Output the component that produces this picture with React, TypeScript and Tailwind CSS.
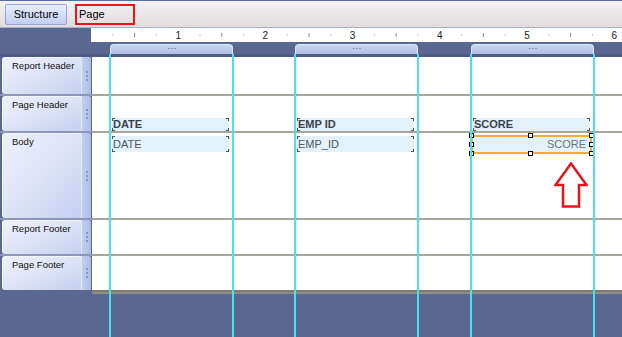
import React from 'react';

const font = { fontFamily: '"Liberation Sans", Arial, sans-serif' };

function Ruler() {
  const items = [];
  for (let n = 1; n <= 24; n++) {
    const x = n * 21.8;
    if (n % 4 === 0) {
      items.push(
        <text key={n} x={x} y={11} fontSize="10" textAnchor="middle" fill="#1a1a1a" fontFamily="Liberation Sans, Arial, sans-serif">
          {n / 4}
        </text>
      );
    } else if (n % 2 === 0) {
      items.push(<rect key={n} x={x - 0.5} y={5} width={1} height={4} fill="#8a8a8a" />);
    } else {
      items.push(<rect key={n} x={x - 0.5} y={6.5} width={1} height={1} fill="#9a9a9a" />);
    }
  }
  return (
    <svg width="531" height="14" className="block">
      {items}
    </svg>
  );
}

function Tab({ className }: { className: string }) {
  return (
    <div className={`h-[10px] rounded-t-[4px] border-t border-l border-r border-[#dfe6f8] bg-gradient-to-b from-[#c9d5f2] to-[#b1c1e7] flex justify-center gap-[1px] pt-[3px] ${className}`}>
      <span className="w-[2px] h-[1px] bg-[#8d96b2]" />
      <span className="w-[2px] h-[1px] bg-[#8d96b2]" />
      <span className="w-[2px] h-[1px] bg-[#8d96b2]" />
    </div>
  );
}

function Handle() {
  return (
    <div className="w-[10px] shrink-0 bg-gradient-to-r from-[#c2cdee] to-[#aebce4] border-l border-[#e2e7f8] rounded-tr-[2px] flex flex-col items-center justify-center gap-[2px]">
      <span className="w-[2px] h-[2px] bg-[#8f98b6]" />
      <span className="w-[2px] h-[2px] bg-[#8f98b6]" />
      <span className="w-[2px] h-[2px] bg-[#8f98b6]" />
    </div>
  );
}

function Label({ text }: { text: string }) {
  return (
    <div className="w-[92px] shrink-0 pl-[2px] pr-[1px] flex">
      <div className="flex-1 rounded-l-[3px] bg-gradient-to-br from-[#eef0fb] via-[#dde2f7] to-[#c6cff0] border-t border-l border-[#f4f6fd] pl-[9px] pt-[2px] text-[9.5px] text-[#111] leading-[12px]">
        {text}
      </div>
      <Handle />
    </div>
  );
}

function Sep() {
  return (
    <div className="flex h-[2px]">
      <div className="w-[92px] shrink-0 bg-[#8e97ba]" />
      <div className="flex-1 bg-[#a6a69c]" />
    </div>
  );
}

function Corners() {
  return (
    <>
      <span className="absolute left-0 top-0 w-[3px] h-[3px] border-l border-t border-[#4c545c]" />
      <span className="absolute right-0 top-0 w-[3px] h-[3px] border-r border-t border-[#4c545c]" />
      <span className="absolute left-0 bottom-0 w-[3px] h-[3px] border-l border-b border-[#4c545c]" />
      <span className="absolute right-0 bottom-0 w-[3px] h-[3px] border-r border-b border-[#4c545c]" />
    </>
  );
}

function HeadField({ text, className }: { text: string; className: string }) {
  return (
    <div className={`relative w-[117px] h-[13px] bg-[#e3f1fb] pl-[1px] text-[11px] font-bold leading-[13px] text-[#38414e] ${className}`}>
      {text}
      <Corners />
    </div>
  );
}

function BodyField({ text, className }: { text: string; className: string }) {
  return (
    <div className={`relative w-[117px] h-[16px] bg-[#e3f1fb] pl-[1px] text-[11px] leading-[16px] text-[#4f5864] ${className}`}>
      {text}
      <Corners />
    </div>
  );
}

function Knob({ className }: { className: string }) {
  return <span className={`absolute w-[5px] h-[5px] bg-white border border-black ${className}`} />;
}

export default function App() {
  const guides = ['left-[109px]', 'left-[232px]', 'left-[294px]', 'left-[417px]', 'left-[470px]', 'left-[593px]'];
  return (
    <div className="relative w-[622px] h-[337px] overflow-hidden bg-[#5a6891]" style={font}>
      {/* toolbar */}
      <div className="h-[28px] border-t border-[#5d6da3] border-b border-b-[#a9afc9] bg-gradient-to-b from-[#f3f1f1] to-[#e1dddf] flex items-center pl-[5px] gap-[8px]">
        <div className="w-[62px] h-[21px] rounded-[2px] border border-[#98a4d6] bg-gradient-to-b from-[#e8eefc] to-[#c2cdf2] flex items-center justify-center text-[11px] text-black">
          Structure
        </div>
        <div className="w-[60px] h-[21px] border-2 border-[#e8141c] pl-[2px] flex items-center text-[11px] text-black">
          Page
        </div>
      </div>

      {/* ruler */}
      <div className="flex h-[14px]">
        <div className="w-[91px] shrink-0" />
        <div className="flex-1 bg-white">
          <Ruler />
        </div>
      </div>

      {/* column tabs */}
      <div className="h-[15px] flex flex-col">
        <div className="flex h-[12px] items-end">
          <Tab className="ml-[110px] w-[123px]" />
          <Tab className="ml-[62px] w-[123px]" />
          <Tab className="ml-[53px] w-[123px]" />
        </div>
        <div className="h-[3px] bg-[#4e5b85]" />
      </div>

      {/* Report Header */}
      <div className="flex h-[37px]">
        <Label text="Report Header" />
        <div className="flex-1 bg-white" />
      </div>
      <Sep />

      {/* Page Header */}
      <div className="flex h-[35px]">
        <Label text="Page Header" />
        <div className="flex-1 bg-white flex items-end">
          <HeadField text="DATE" className="ml-[20px]" />
          <HeadField text="EMP ID" className="ml-[68px]" />
          <HeadField text="SCORE" className="ml-[59px]" />
        </div>
      </div>
      <Sep />

      {/* Body */}
      <div className="flex h-[85px]">
        <Label text="Body" />
        <div className="relative flex-1 bg-white flex items-start">
          <BodyField text="DATE" className="ml-[20px] mt-[3px]" />
          <BodyField text="EMP_ID" className="ml-[68px] mt-[3px]" />
          <div className="relative ml-[57px] mt-[2px] w-[121px] h-[19px] border-2 border-[#f4a83e] px-[1px]">
            <div className="h-full bg-[#e3f1fb] pr-[3px] text-right text-[11px] leading-[15px] text-[#6b7581]">SCORE</div>
            <Knob className="-left-[4px] -top-[4px]" />
            <Knob className="left-[55px] -top-[4px]" />
            <Knob className="-right-[4px] -top-[4px]" />
            <Knob className="-left-[4px] top-[5px]" />
            <Knob className="-right-[4px] top-[5px]" />
            <Knob className="-left-[4px] -bottom-[4px]" />
            <Knob className="left-[55px] -bottom-[4px]" />
            <Knob className="-right-[4px] -bottom-[4px]" />
          </div>
          <svg className="absolute left-[462px] top-[29px]" width="34" height="46">
            <path d="M17 1.5 L32.5 23 L25 23 L25 44.5 L9 44.5 L9 23 L1.5 23 Z" fill="white" stroke="#e8141c" strokeWidth="2.5" strokeLinejoin="miter" />
          </svg>
        </div>
      </div>
      <Sep />

      {/* Report Footer */}
      <div className="flex h-[34px]">
        <Label text="Report Footer" />
        <div className="flex-1 bg-white" />
      </div>
      <Sep />

      {/* Page Footer */}
      <div className="flex h-[34px]">
        <Label text="Page Footer" />
        <div className="flex-1 bg-white" />
      </div>
      <div className="flex">
        <div className="w-[92px] shrink-0" />
        <div className="flex-1">
          <div className="h-[2px] bg-[#7b7b72]" />
          <div className="h-[2px] bg-[#8f8f86]" />
        </div>
      </div>

      {/* column guides */}
      {guides.map((g) => (
        <div key={g} className={`absolute top-[54px] bottom-0 w-[2px] bg-[#45e2f0] ${g}`} />
      ))}
    </div>
  );
}
